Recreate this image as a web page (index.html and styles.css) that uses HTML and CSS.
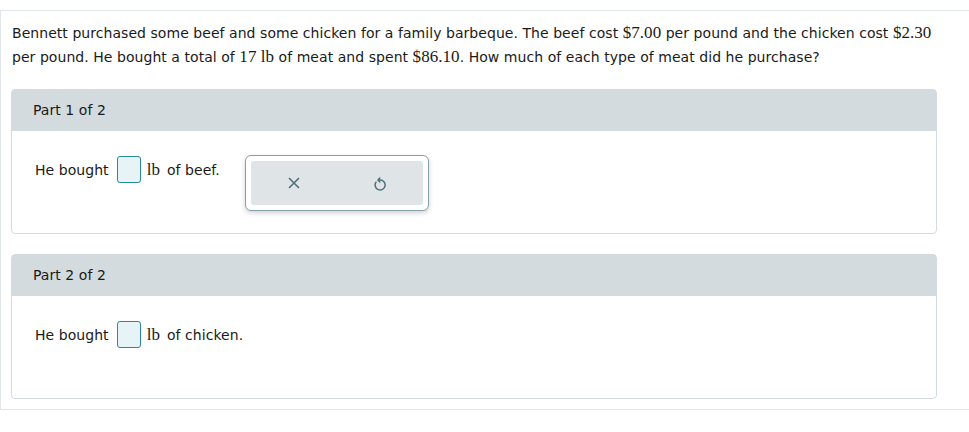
FILE: index.html
```html
<!DOCTYPE html>
<html lang="en">
<head>
  <meta charset="UTF-8">
  <title>Meat problem</title>
  <link rel="stylesheet" href="styles.css">
</head>
<body>
  <div class="question">
    <p class="stem">
      Bennett purchased some beef and some chicken for a family barbeque. The beef cost <span class="math">$7.00</span> per pound and the chicken cost <span class="math">$2.30</span>
      per pound. He bought a total of <span class="math">17 lb</span> of meat and spent <span class="math">$86.10</span>. How much of each type of meat did he purchase?
    </p>

    <div class="part">
      <div class="part-head">Part 1 of 2</div>
      <div class="part-body">
        <div class="answer">
          <span>He bought</span>
          <span class="blank"></span>
          <span class="math unit">lb</span>
          <span>of beef.</span>
        </div>
        <div class="tools">
          <div class="tools-inner">
            <button class="tool" title="Clear">
              <svg width="14" height="14" viewBox="0 0 14 14"><path d="M2 2 L12 12 M12 2 L2 12" stroke="#4f6f7b" stroke-width="1.6" fill="none"/></svg>
            </button>
            <button class="tool" title="Undo">
              <svg width="14" height="16" viewBox="0 0 14 16"><path d="M3 7.2 A5 5 0 1 0 7 5 H5.2 M6.8 3 L5 5 L6.8 7" stroke="#4f6f7b" stroke-width="1.5" fill="none" stroke-linecap="round" stroke-linejoin="round"/></svg>
            </button>
          </div>
        </div>
      </div>
    </div>

    <div class="part">
      <div class="part-head">Part 2 of 2</div>
      <div class="part-body">
        <div class="answer">
          <span>He bought</span>
          <span class="blank"></span>
          <span class="math unit">lb</span>
          <span>of chicken.</span>
        </div>
      </div>
    </div>
  </div>
</body>
</html>
```

FILE: styles.css
```css
body {
  margin: 0;
  font-family: "DejaVu Sans", Verdana, sans-serif;
  font-size: 14px;
  letter-spacing: 0.05px;
  color: #1a1a1a;
  overflow: hidden;
}
.question {
  margin-top: 10px;
  width: 990px;
  border: 1px solid #e1e7e9;
  padding: 10px 0 10px 10px;
}
.stem {
  margin: 0 0 20px 1px;
  width: 930px;
  line-height: 23px;
}
.math {
  font-family: "Liberation Serif", "Times New Roman", serif;
  font-size: 17px;
}
.part {
  width: 924px;
  border: 1px solid #d3dbde;
  border-radius: 4px;
  margin-bottom: 20px;
}
.part:last-child {
  margin-bottom: 0;
}
.part-head {
  background-color: #d3dbde;
  height: 41px;
  line-height: 41px;
  padding-left: 21px;
}
.part-body {
  display: flex;
  align-items: flex-start;
  min-height: 78px;
  padding: 24px 0 0 23px;
}
.answer {
  display: flex;
  align-items: center;
  margin-top: 1px;
}
.blank {
  width: 22px;
  height: 25px;
  margin: 0 6px 0 8px;
  background-color: #e6f4f7;
  border: 1px solid #2a8a98;
  border-radius: 3px;
}
.unit {
  margin-right: 7px;
}
.tools {
  margin-left: 25px;
  padding: 5px;
  border: 1px solid #86a0a9;
  border-radius: 6px;
  background: #fff;
  box-shadow: 0 2px 5px rgba(0, 0, 0, 0.18);
}
.tools-inner {
  display: flex;
  background-color: #dfe5e7;
  border-radius: 3px;
}
.tool {
  width: 86px;
  height: 44px;
  border: none;
  background: none;
  padding: 0;
  display: flex;
  align-items: center;
  justify-content: center;
  cursor: pointer;
}
```
